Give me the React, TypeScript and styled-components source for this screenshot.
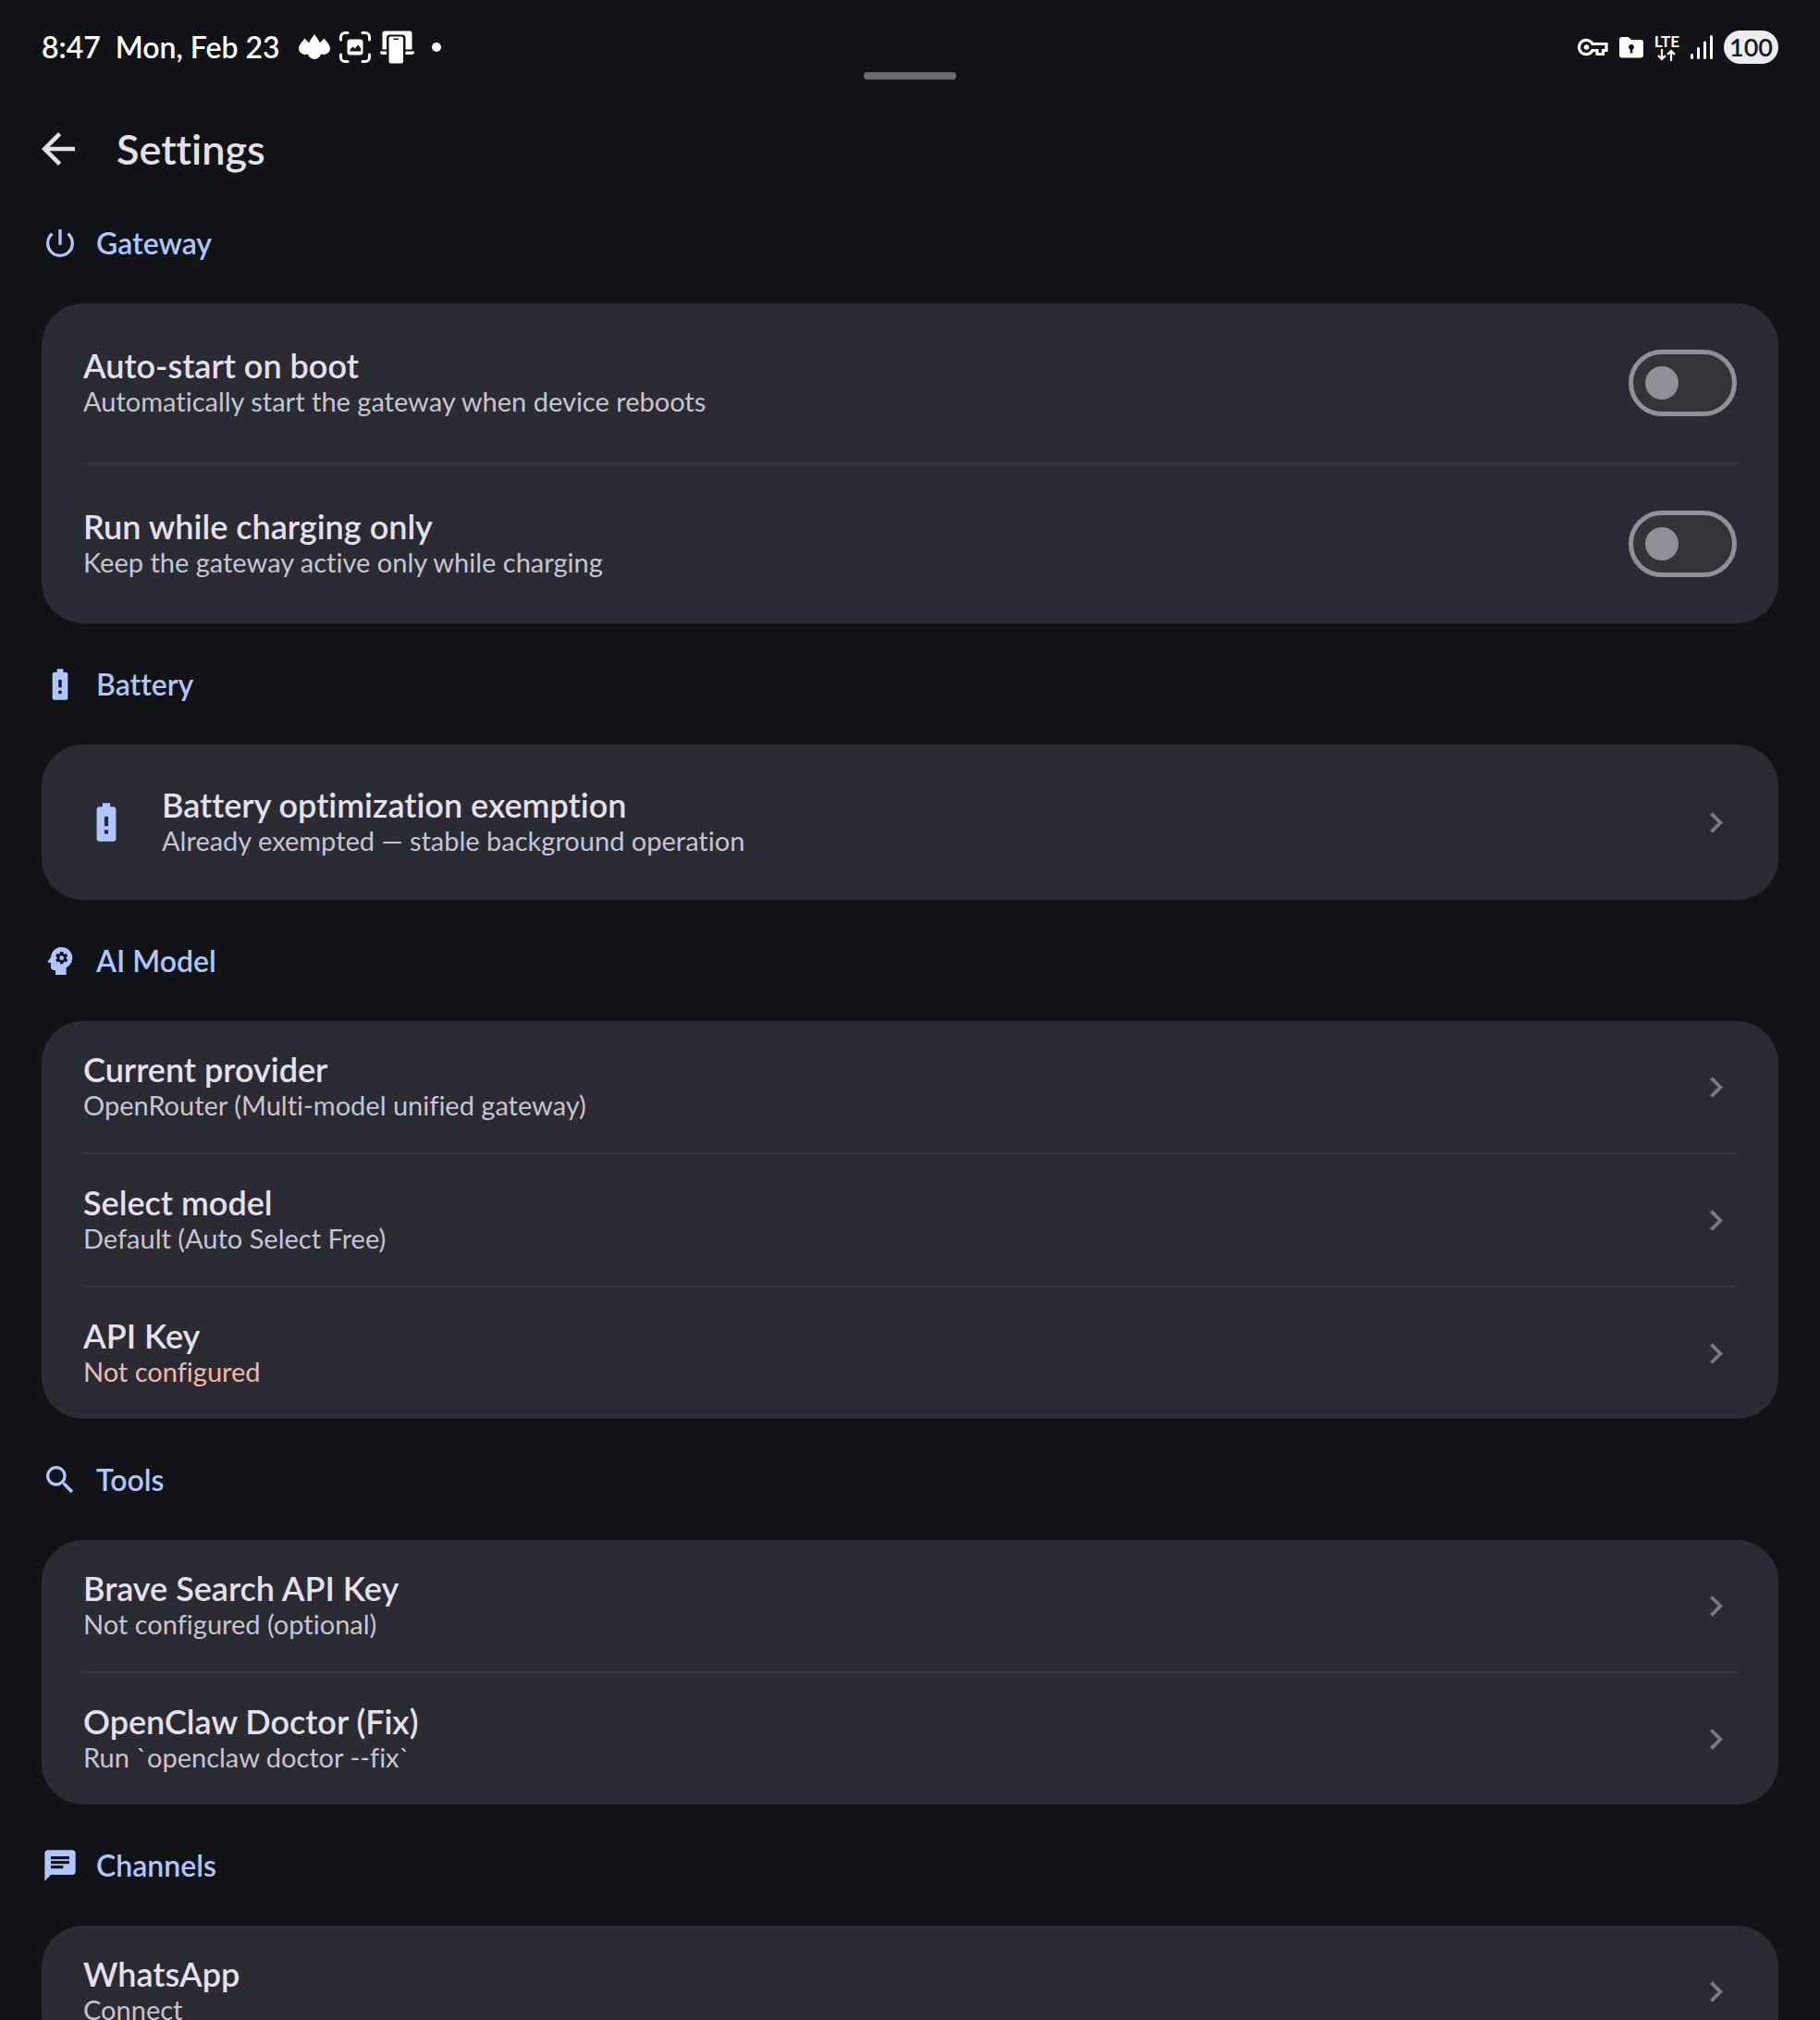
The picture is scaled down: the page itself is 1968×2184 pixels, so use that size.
import React, { useState } from "react";
import styled, { createGlobalStyle } from "styled-components";
import {
  MdArrowBack,
  MdBatteryAlert,
  MdChat,
  MdChevronRight,
  MdPowerSettingsNew,
  MdPsychology,
  MdSearch,
} from "react-icons/md";

const GlobalStyle = createGlobalStyle`
  * { box-sizing: border-box; }
  body {
    margin: 0;
    background: #111316;
    font-family: Lato, "Liberation Sans", sans-serif;
    font-variant-ligatures: none;
  }
`;

const Screen = styled.div`
  display: flex;
  flex-direction: column;
  height: 100vh;
  background: #111316;
  color: #e4e1ec;
`;

const StatusBar = styled.div`
  position: relative;
  display: flex;
  flex: none;
  align-items: center;
  justify-content: space-between;
  height: 102px;
  padding: 0 45px;
  color: #ffffff;
`;

const StatusGroup = styled.div<{ $gap: number }>`
  display: flex;
  align-items: center;
  gap: ${(p) => p.$gap}px;
`;

const Clock = styled.div`
  display: flex;
  gap: 16px;
  margin-right: 10px;
  font-size: 32px;
  line-height: 44px;
  font-weight: 600;
`;

const MoreDot = styled.span`
  width: 10px;
  height: 10px;
  margin-left: 8px;
  border-radius: 50%;
  background: #ffffff;
`;

const Network = styled.div`
  display: flex;
  flex-direction: column;
  align-items: center;
  font-size: 17px;
  line-height: 16px;
  font-weight: 700;
`;

const BatteryPill = styled.div`
  width: 59px;
  height: 36px;
  border-radius: 18px;
  background: #ececee;
  color: #17181b;
  font-size: 27px;
  line-height: 36px;
  font-weight: 600;
  text-align: center;
`;

const DragHandle = styled.div`
  position: absolute;
  left: 50%;
  bottom: 16px;
  width: 100px;
  height: 8px;
  margin-left: -50px;
  border-radius: 4px;
  background: #6b6c6c;
`;

const AppBar = styled.header`
  display: flex;
  flex: none;
  align-items: center;
  gap: 36px;
  height: 95px;
  padding: 23px 36px 0;
`;

const BackButton = styled.button`
  display: flex;
  padding: 0;
  border: 0;
  background: none;
  color: #e3e3e6;
  font-size: 54px;
`;

const PageTitle = styled.h1`
  margin: 0;
  color: #e3e3e6;
  font-size: 45px;
  line-height: 60px;
  font-weight: 600;
`;

const Content = styled.main`
  flex: 1;
  min-height: 0;
  padding: 0 45px;
  overflow: hidden;
`;

const SectionTitle = styled.h2`
  display: flex;
  align-items: center;
  gap: 19px;
  height: 131px;
  margin: 0;
  color: #b0c6ff;
  font-size: 32px;
  line-height: 44px;
  font-weight: 600;

  svg { font-size: 40px; }
`;

const Card = styled.div`
  padding: 0 45px;
  border-radius: 45px;
  background: #2b2b33;
`;

const rowLayout = `
  display: flex;
  align-items: center;
  gap: 35px;
  width: 100%;
  padding: 0;
  text-align: left;
`;

const ToggleRow = styled.label`
  ${rowLayout}
  height: 172px;

  & + & {
    height: 174px;
    border-top: 2px solid #36363f;
  }
`;

const LinkRow = styled.button<{ $tall?: boolean }>`
  ${rowLayout}
  height: ${(p) => (p.$tall ? 168 : 142)}px;
  border: 0;
  background: none;
  color: inherit;
  font-family: inherit;
  font-variant-ligatures: inherit;

  & + & {
    height: 144px;
    border-top: 2px solid #36363f;
  }
`;

const RowIcon = styled.span`
  display: flex;
  color: #b0c6ff;
  font-size: 50px;
`;

const RowText = styled.span`
  display: flex;
  flex: 1;
  flex-direction: column;
  padding-bottom: 2px;
`;

const RowTitle = styled.span`
  font-size: 36px;
  line-height: 42px;
  font-weight: 600;
`;

const RowDetail = styled.span<{ $warn?: boolean }>`
  color: ${(p) => (p.$warn ? "#f0b8af" : "#c7c5d0")};
  font-size: 29px;
  line-height: 36px;
`;

const Chevron = styled(MdChevronRight)`
  color: #7b7a83;
  font-size: 45px;
`;

const Switch = styled.input`
  display: flex;
  align-items: center;
  width: 117px;
  height: 72px;
  margin: 0;
  padding: 0 13px;
  appearance: none;
  border: 5px solid #91909a;
  border-radius: 36px;
  background: #343438;

  &::before {
    content: "";
    width: 36px;
    height: 36px;
    border-radius: 50%;
    background: #91909a;
  }

  &:checked {
    justify-content: flex-end;
    border-color: #b0c6ff;
  }
`;

const LotusIcon = () => (
  <svg width="34" height="28" viewBox="0 0 34 28" fill="#fff" aria-hidden="true">
    <path d="M6.500 4.500C9.500 8 14 11.500 14 15.500A7 6.500 0 0 1 0 15.500C0 11.500 4 8 6.500 4.500Z" />
    <path d="M27.500 4.500C30 8 34 11.500 34 15.500A7 6.500 0 0 1 20 15.500C20 11.500 24.500 8 27.500 4.500Z" />
    <path d="M17 0C20 4.500 25 10 25 18A8 9 0 0 1 9 18C9 10 14 4.500 17 0Z" />
  </svg>
);

const CaptureIcon = () => (
  <svg width="34" height="34" viewBox="0 0 34 34" fill="none" aria-hidden="true">
    <path
      d="M1.500 9V6A4.500 4.500 0 0 1 6 1.500H9M25 1.500H28A4.500 4.500 0 0 1 32.500 6V9M32.500 25V28A4.500 4.500 0 0 1 28 32.500H25M9 32.500H6A4.500 4.500 0 0 1 1.500 28V25"
      stroke="#fff"
      strokeWidth="3"
      strokeLinecap="round"
    />
    <path
      fillRule="evenodd"
      d="M11.500 8.500H22.500A3 3 0 0 1 25.500 11.500V22.500A3 3 0 0 1 22.500 25.500H11.500A3 3 0 0 1 8.500 22.500V11.500A3 3 0 0 1 11.500 8.500ZM11.500 21.500H23V18L20 14.500L17 18.500L14.500 16.500L11.500 19.500Z"
      fill="#fff"
    />
  </svg>
);

const LinkedDevicesIcon = () => (
  <svg width="38" height="36" viewBox="0 0 38 36" fill="#fff" aria-hidden="true">
    <path d="M5 .5H32A2.500 2.500 0 0 1 34.500 3V20.500H27.500V8A3.500 3.500 0 0 0 24 4.500H10.500A3.500 3.500 0 0 0 7 8V20.500H2.500V3A2.500 2.500 0 0 1 5 .5Z" />
    <path d="M0 22.500H7V26H3A3 3 0 0 1 0 23ZM27.500 22.500H37V23A3 3 0 0 1 34 26H27.500Z" />
    <path
      fillRule="evenodd"
      d="M11.500 6.500H23A2 2 0 0 1 25 8.500V33.500A2 2 0 0 1 23 35.500H11.500A2 2 0 0 1 9.500 33.500V8.500A2 2 0 0 1 11.500 6.500ZM14.500 8.500V10H20V8.500Z"
    />
  </svg>
);

const KeyIcon = () => (
  <svg width="33" height="20" viewBox="0 0 33 20" fill="none" aria-hidden="true">
    <path d="M16 6.500A7.700 7.700 0 1 0 16 13.500H21V17.500H27.500V13.500H31V6.500Z" stroke="#fff" strokeWidth="3.200" />
    <circle cx="9.500" cy="10" r="2.800" fill="#fff" />
  </svg>
);

const LockedFolderIcon = () => (
  <svg width="26" height="23" viewBox="0 0 26 23" fill="#fff" aria-hidden="true">
    <path
      fillRule="evenodd"
      d="M3 0H9.500L13 3H23A3 3 0 0 1 26 6V19.500A3 3 0 0 1 23 22.500H3A3 3 0 0 1 0 19.500V3A3 3 0 0 1 3 0ZM13 8A3 3 0 0 0 11.700 13.700V17.500H14.300V13.700A3 3 0 0 0 13 8Z"
    />
  </svg>
);

const DataArrowsIcon = () => (
  <svg width="20" height="13" viewBox="0 0 20 13" fill="none" stroke="#fff" strokeWidth="2.200" aria-hidden="true">
    <path d="M5 0V11M1 7L5 11L9 7M15 13V2M11 6L15 2L19 6" />
  </svg>
);

const SignalIcon = () => (
  <svg width="24" height="26" viewBox="0 0 24 26" stroke="#fff" strokeWidth="3" strokeLinecap="round" aria-hidden="true">
    <path d="M1.500 21.500V24.500M8.500 14.500V24.500M15.500 8V24.500M22.500 1.500V24.500" />
  </svg>
);

type ToggleProps = { title: string; detail: string };

function ToggleSetting({ title, detail }: ToggleProps) {
  const [on, setOn] = useState(false);
  return (
    <ToggleRow>
      <RowText>
        <RowTitle>{title}</RowTitle>
        <RowDetail>{detail}</RowDetail>
      </RowText>
      <Switch type="checkbox" role="switch" checked={on} onChange={(e) => setOn(e.target.checked)} />
    </ToggleRow>
  );
}

type LinkProps = { title: string; detail: string; warn?: boolean; icon?: React.ReactNode };

function LinkSetting({ title, detail, warn, icon }: LinkProps) {
  return (
    <LinkRow type="button" $tall={Boolean(icon)}>
      {icon && <RowIcon>{icon}</RowIcon>}
      <RowText>
        <RowTitle>{title}</RowTitle>
        <RowDetail $warn={warn}>{detail}</RowDetail>
      </RowText>
      <Chevron />
    </LinkRow>
  );
}

type SectionProps = { icon: React.ReactNode; title: string; children: React.ReactNode };

function Section({ icon, title, children }: SectionProps) {
  return (
    <section>
      <SectionTitle>
        {icon}
        {title}
      </SectionTitle>
      <Card>{children}</Card>
    </section>
  );
}

export default function App() {
  return (
    <Screen>
      <GlobalStyle />
      <StatusBar>
        <StatusGroup $gap={10}>
          <Clock>
            <span>8:47</span>
            <span>Mon, Feb 23</span>
          </Clock>
          <LotusIcon />
          <CaptureIcon />
          <LinkedDevicesIcon />
          <MoreDot />
        </StatusGroup>
        <StatusGroup $gap={12}>
          <KeyIcon />
          <LockedFolderIcon />
          <Network>
            <span>LTE</span>
            <DataArrowsIcon />
          </Network>
          <SignalIcon />
          <BatteryPill>100</BatteryPill>
        </StatusGroup>
        <DragHandle />
      </StatusBar>
      <AppBar>
        <BackButton type="button" aria-label="Back">
          <MdArrowBack />
        </BackButton>
        <PageTitle>Settings</PageTitle>
      </AppBar>
      <Content>
        <Section icon={<MdPowerSettingsNew />} title="Gateway">
          <ToggleSetting title="Auto-start on boot" detail="Automatically start the gateway when device reboots" />
          <ToggleSetting title="Run while charging only" detail="Keep the gateway active only while charging" />
        </Section>
        <Section icon={<MdBatteryAlert />} title="Battery">
          <LinkSetting
            icon={<MdBatteryAlert />}
            title="Battery optimization exemption"
            detail="Already exempted — stable background operation"
          />
        </Section>
        <Section icon={<MdPsychology />} title="AI Model">
          <LinkSetting title="Current provider" detail="OpenRouter (Multi-model unified gateway)" />
          <LinkSetting title="Select model" detail="Default (Auto Select Free)" />
          <LinkSetting title="API Key" detail="Not configured" warn />
        </Section>
        <Section icon={<MdSearch />} title="Tools">
          <LinkSetting title="Brave Search API Key" detail="Not configured (optional)" />
          <LinkSetting title="OpenClaw Doctor (Fix)" detail="Run `openclaw doctor --fix`" />
        </Section>
        <Section icon={<MdChat />} title="Channels">
          <LinkSetting title="WhatsApp" detail="Connect" />
        </Section>
      </Content>
    </Screen>
  );
}
